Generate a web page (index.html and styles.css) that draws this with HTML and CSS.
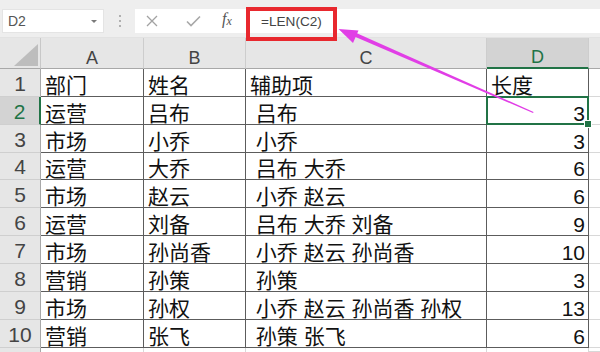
FILE: index.html
```html
<!DOCTYPE html>
<html lang="zh-CN">
<head>
<meta charset="utf-8">
<title>LEN</title>
<link rel="stylesheet" href="styles.css">
</head>
<body>
<div class="app">
  <div class="toolbar">
    <div class="namebox"><span class="ref">D2</span><span class="dd"></span></div>
    <div class="dots"><i></i><i></i><i></i></div>
    <div class="fbar">
      <span class="fbtn">
        <svg width="12" height="12" viewBox="0 0 12 12"><path d="M1 1L11 11M11 1L1 11" stroke="#a2a2a2" stroke-width="1.3" fill="none"/></svg>
      </span>
      <span class="fbtn">
        <svg width="15" height="12" viewBox="0 0 15 12"><path d="M1 6.5L5 10.5L14 1.5" stroke="#a8a8a8" stroke-width="1.6" fill="none"/></svg>
      </span>
      <span class="fx">f<sub>x</sub></span>
      <span class="formula">=LEN(C2)</span>
    </div>
  </div>
  <div class="grid">
    <div class="corner"><svg width="24" height="22" viewBox="0 0 24 22"><polygon points="24,0 24,22 0,22" fill="#bdbdbd"/></svg></div>
    <div class="ch">A</div><div class="ch">B</div><div class="ch">C</div><div class="ch ch-sel">D</div><div class="ch ch-e"></div>

    <div class="rh">1</div><div class="c">部门</div><div class="c">姓名</div><div class="c">辅助项</div><div class="c">长度</div><div class="e"></div>
    <div class="rh rh-sel">2</div><div class="c">运营</div><div class="c">吕布</div><div class="c"> 吕布</div><div class="c num sel">3</div><div class="e"></div>
    <div class="rh">3</div><div class="c">市场</div><div class="c">小乔</div><div class="c"> 小乔</div><div class="c num">3</div><div class="e"></div>
    <div class="rh">4</div><div class="c">运营</div><div class="c">大乔</div><div class="c"> 吕布 大乔</div><div class="c num">6</div><div class="e"></div>
    <div class="rh">5</div><div class="c">市场</div><div class="c">赵云</div><div class="c"> 小乔 赵云</div><div class="c num">6</div><div class="e"></div>
    <div class="rh">6</div><div class="c">运营</div><div class="c">刘备</div><div class="c"> 吕布 大乔 刘备</div><div class="c num">9</div><div class="e"></div>
    <div class="rh">7</div><div class="c">市场</div><div class="c">孙尚香</div><div class="c"> 小乔 赵云 孙尚香</div><div class="c num">10</div><div class="e"></div>
    <div class="rh">8</div><div class="c">营销</div><div class="c">孙策</div><div class="c"> 孙策</div><div class="c num">3</div><div class="e"></div>
    <div class="rh">9</div><div class="c">市场</div><div class="c">孙权</div><div class="c"> 小乔 赵云 孙尚香 孙权</div><div class="c num">13</div><div class="e"></div>
    <div class="rh">10</div><div class="c">营销</div><div class="c">张飞</div><div class="c"> 孙策 张飞</div><div class="c num">6</div><div class="e"></div>
    <div class="rh rh-last"></div><div class="l"></div><div class="l"></div><div class="l"></div><div class="l"></div><div class="e"></div>
  </div>
  <div class="redbox"></div>
  <svg class="arrow" width="600" height="352" viewBox="0 0 600 352">
    <path d="M352 35.5 L533 113 L533.6 112 L354 32 Z" fill="#e13ee6"/>
    <polygon points="338.5,29 358.5,30.5 353,43" fill="#e13ee6"/>
  </svg>
</div>
</body>
</html>
```
FILE: styles.css
```css
* { box-sizing: border-box; }
html, body { margin: 0; padding: 0; }
body {
  width: 600px;
  height: 352px;
  overflow: hidden;
  background: #fff;
  font-family: "Liberation Sans", "Noto Sans CJK SC", sans-serif;
}
.app { position: relative; width: 600px; height: 352px; overflow: hidden; }

.toolbar {
  height: 38px;
  background: #eeeeee;
  display: flex;
  align-items: flex-start;
  padding-top: 9px;
  border-bottom: 1px solid #e2e2e2;
}
.namebox {
  margin-left: 2px;
  width: 102px;
  height: 24px;
  background: #fff;
  border: 1px solid #e4e4e4;
  display: flex;
  align-items: center;
  justify-content: space-between;
  padding: 0 6px 0 5px;
}
.ref { font-size: 14px; color: #555; }
.dd {
  width: 0; height: 0;
  border-left: 3px solid transparent;
  border-right: 3px solid transparent;
  border-top: 3px solid #7a7a7a;
}
.dots {
  width: 31px;
  height: 24px;
  display: flex;
  flex-direction: column;
  align-items: center;
  justify-content: center;
  gap: 3px;
}
.dots i { display: block; width: 2px; height: 2px; background: #b0b0b0; }
.fbar {
  flex: 1;
  height: 24px;
  background: #fff;
  display: flex;
  align-items: center;
  padding-left: 11px;
}
.fbtn { width: 40px; display: flex; align-items: center; }
.fbtn + .fbtn { width: 36px; }
.fx {
  font-family: "Liberation Serif", serif;
  font-style: italic;
  font-size: 16px;
  color: #555;
  width: 39px;
  margin-top: -3px;
}
.fx sub { font-size: 12px; vertical-align: -1px; }
.formula { font-size: 13.6px; color: #444; padding-left: 0; }

.grid {
  display: grid;
  grid-template-columns: 41px 103px 102px 241px 102px 11px;
  grid-template-rows: 31px repeat(10, 27.87px) 1fr;
  height: 314px;
  overflow: hidden;
}
.corner {
  background: #e6e6e6;
  border-right: 1px solid #c8c8c8;
  border-bottom: 1px solid #a8a8a8;
  display: flex;
  align-items: flex-end;
  justify-content: flex-end;
  padding: 0 2px 2px 0;
}
.ch {
  background: #e6e6e6;
  border-right: 1px solid #cdcdcd;
  border-bottom: 1px solid #a8a8a8;
  display: flex;
  align-items: flex-end;
  justify-content: center;
  font-size: 18px;
  line-height: 20px;
  color: #444;
}
.ch-sel {
  background: #d3d3d3;
  color: #217346;
  border-bottom: 2px solid #217346;
}
.ch-e { border-right: none; }
.rh {
  background: #e6e6e6;
  border-right: 1px solid #a8a8a8;
  border-bottom: 1px solid #cfcfcf;
  display: flex;
  align-items: flex-end;
  justify-content: center;
  font-size: 21px;
  line-height: 20px;
  padding-bottom: 2px;
  color: #444;
}
.rh-sel {
  background: #d3d3d3;
  color: #217346;
  border-right: 2px solid #217346;
}
.c {
  border-right: 1px solid #5c5c5c;
  border-bottom: 1px solid #5c5c5c;
  display: flex;
  align-items: flex-end;
  padding-left: 4px;
  font-size: 21px;
  line-height: 20px;
  color: #111;
  white-space: pre;
  overflow: hidden;
}
.num { justify-content: flex-end; padding-right: 3px; padding-left: 0; }
.sel { position: relative; overflow: visible; }
.sel::after {
  content: "";
  position: absolute;
  left: -1px; top: -1px; right: -1px; bottom: -1px;
  border: 2px solid #217346;
}
.sel::before {
  content: "";
  position: absolute;
  right: -4px; bottom: -4px;
  width: 6px; height: 6px;
  background: #217346;
  border: 1px solid #fff;
  z-index: 2;
}
.e { border-bottom: 1px solid #d8d8d8; }
.l { border-right: 1px solid #d8d8d8; }
.rh-last { border-bottom: none; }

.redbox {
  position: absolute;
  left: 246px;
  top: 7px;
  width: 91px;
  height: 34px;
  border: 4px solid #e8282e;
}
.arrow { position: absolute; left: 0; top: 0; pointer-events: none; }
```
